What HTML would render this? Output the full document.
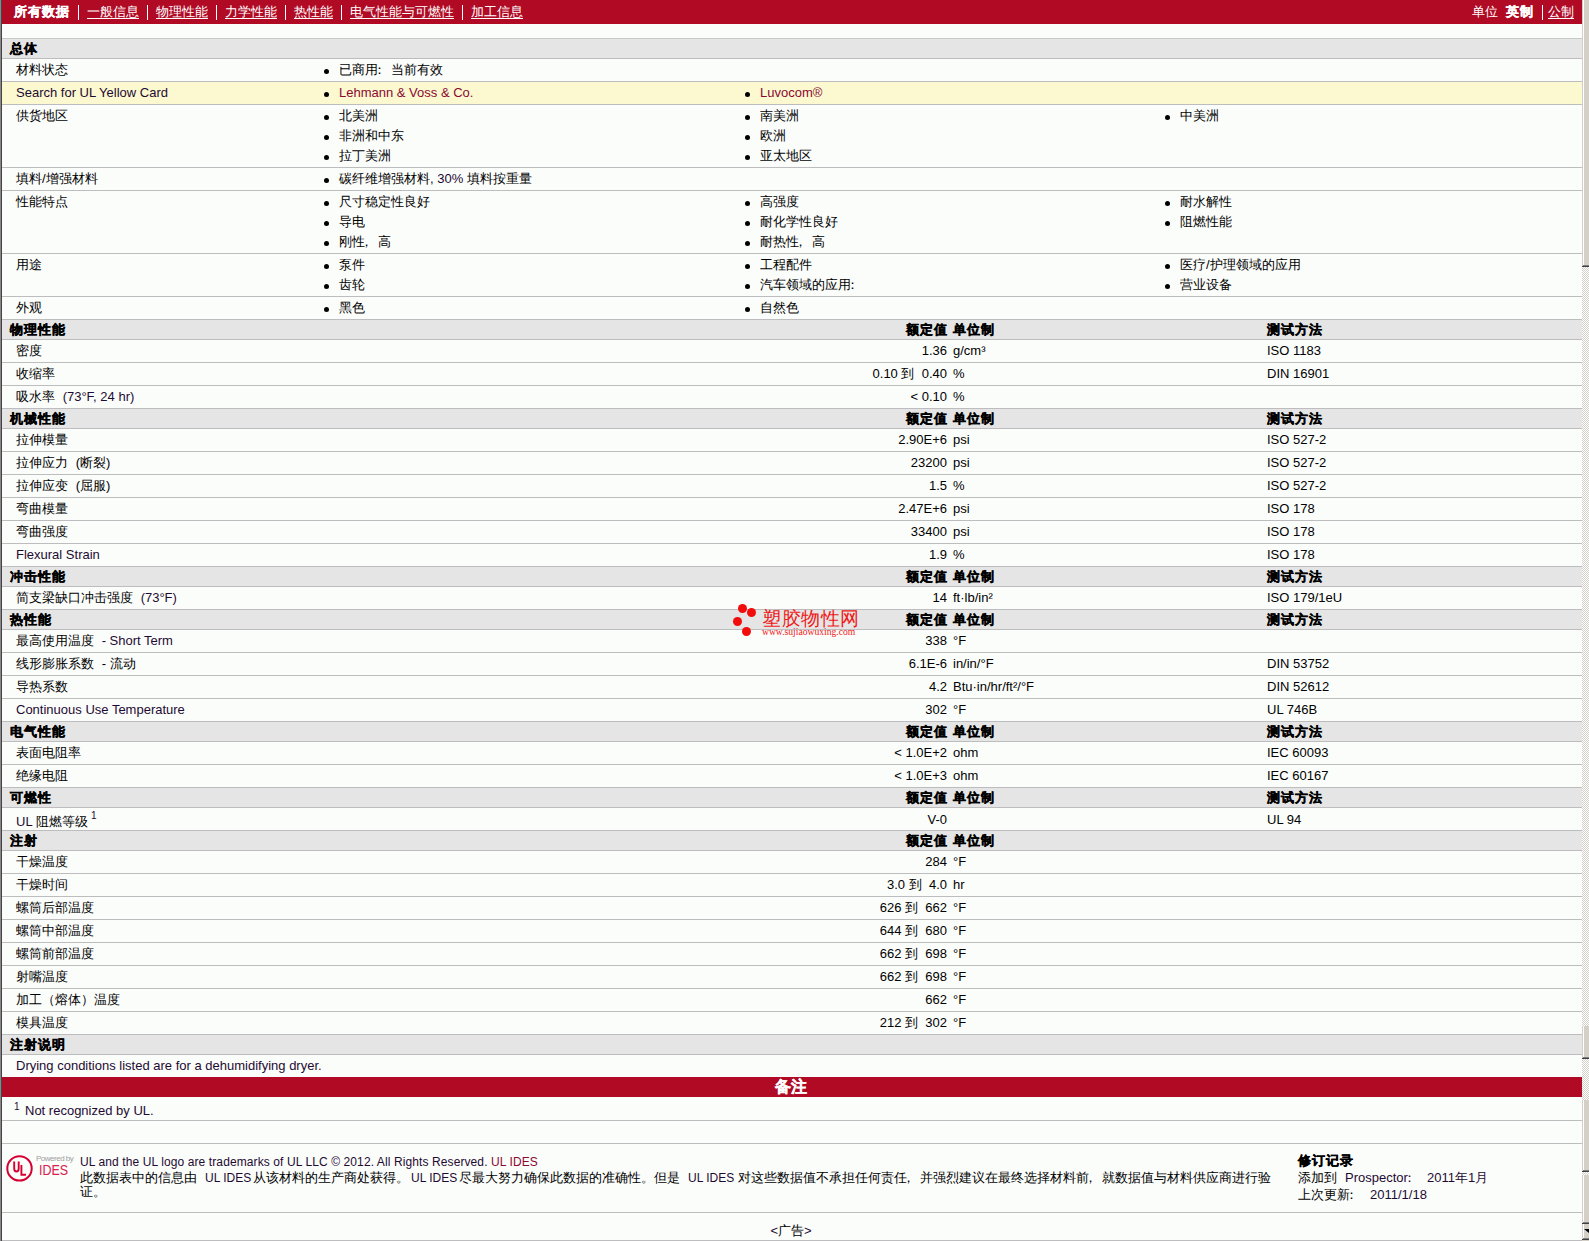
<!DOCTYPE html>
<html><head><meta charset="utf-8"><style>
html,body{margin:0;padding:0;}
body{width:1589px;height:1241px;overflow:hidden;position:relative;background:#FBFDFB;font-family:"Liberation Sans",sans-serif;font-size:13px;color:#000;}
.ln{position:absolute;left:2px;width:1580px;height:1px;}
.gb{position:absolute;left:2px;width:1580px;background:#E4E5E4;}
.rb{position:absolute;left:2px;width:1580px;background:#B00A25;}
.t,.tb,.nv,.bz{position:absolute;white-space:pre;line-height:20px;}
.tb{font-weight:bold;-webkit-text-stroke:0.35px #000;letter-spacing:1px;}
.la{color:#1E0A32;}
.bu{position:absolute;width:5px;height:5px;border-radius:50%;background:#000;}
.nv{top:2px;color:#fff;line-height:20px;}
.nv.u{text-decoration:underline;}
.bz{color:#fff;font-weight:bold;font-size:16px;-webkit-text-stroke:0.3px #fff;text-align:center;line-height:20px;}
sup{font-size:9px;vertical-align:top;position:relative;top:-3px;color:#1E0A32;margin-left:2px}
.ck{position:absolute;left:1582px;width:7px;background:conic-gradient(#D4D0C8 25%,#FFFFFF 0 50%,#D4D0C8 0 75%,#FFFFFF 0) 0 0/2px 2px;}
</style></head><body>
<div style="position:absolute;left:0;top:0;width:1px;height:1241px;background:#8A878A"></div>
<div style="position:absolute;left:1px;top:0;width:1px;height:1241px;background:#454346"></div>
<div class="rb" style="top:0;height:24px"></div>
<div class="nv" style="left:14px;font-weight:bold;letter-spacing:1px;-webkit-text-stroke:0.35px #fff;">所有数据</div>
<div class="nv" style="left:87px;">一般信息</div>
<div style="position:absolute;left:87px;top:18px;width:52px;height:1px;background:#fff"></div>
<div class="nv" style="left:156px;">物理性能</div>
<div style="position:absolute;left:156px;top:18px;width:52px;height:1px;background:#fff"></div>
<div class="nv" style="left:225px;">力学性能</div>
<div style="position:absolute;left:225px;top:18px;width:52px;height:1px;background:#fff"></div>
<div class="nv" style="left:294px;">热性能</div>
<div style="position:absolute;left:294px;top:18px;width:39px;height:1px;background:#fff"></div>
<div class="nv" style="left:350px;">电气性能与可燃性</div>
<div style="position:absolute;left:350px;top:18px;width:104px;height:1px;background:#fff"></div>
<div class="nv" style="left:471px;">加工信息</div>
<div style="position:absolute;left:471px;top:18px;width:52px;height:1px;background:#fff"></div>
<div class="nv" style="left:1472px;">单位</div>
<div class="nv" style="left:1506px;font-weight:bold;letter-spacing:1px;-webkit-text-stroke:0.35px #fff;">英制</div>
<div class="nv" style="left:1548px;">公制</div>
<div style="position:absolute;left:1548px;top:18px;width:26px;height:1px;background:#fff"></div>
<div style="position:absolute;left:78px;top:5px;width:1px;height:15px;background:#fff"></div>
<div style="position:absolute;left:147px;top:5px;width:1px;height:15px;background:#fff"></div>
<div style="position:absolute;left:216px;top:5px;width:1px;height:15px;background:#fff"></div>
<div style="position:absolute;left:285px;top:5px;width:1px;height:15px;background:#fff"></div>
<div style="position:absolute;left:341px;top:5px;width:1px;height:15px;background:#fff"></div>
<div style="position:absolute;left:462px;top:5px;width:1px;height:15px;background:#fff"></div>
<div style="position:absolute;left:1542px;top:5px;width:1px;height:15px;background:#fff"></div>

<div class="ln" style="top:38px;background:#C8CAC8"></div>
<div class="gb" style="top:39px;height:19px"></div>
<div class="tb" style="left:10px;top:39px;line-height:19px">总体</div>
<div class="ln" style="top:58px;background:#BDBDC0"></div>
<div class="t" style="left:16px;top:60px;">材料状态</div>
<div class="ln" style="top:81px;background:#BDBDC0"></div>
<div class="bu" style="left:324px;top:69px"></div>
<div class="t" style="left:339px;top:60px;">已商用<span style="display:inline-block;width:13px;overflow:hidden;vertical-align:top"><span style="position:relative;left:-5px">：</span></span>当前有效</div>
<div class="gb" style="top:82px;height:22px;background:#FCF9D0"></div>
<div class="t" style="left:16px;top:83px;"><span class="la">Search for UL Yellow Card</span></div>
<div class="ln" style="top:104px;background:#BDBDC0"></div>
<div class="bu" style="left:324px;top:92px"></div>
<div class="t" style="left:339px;top:83px;color:#8A0830">Lehmann &amp; Voss &amp; Co.</div>
<div class="bu" style="left:745px;top:92px"></div>
<div class="t" style="left:760px;top:83px;color:#8A0830">Luvocom®</div>
<div class="t" style="left:16px;top:106px;">供货地区</div>
<div class="ln" style="top:167px;background:#BDBDC0"></div>
<div class="bu" style="left:324px;top:115px"></div>
<div class="t" style="left:339px;top:106px;">北美洲</div>
<div class="bu" style="left:324px;top:135px"></div>
<div class="t" style="left:339px;top:126px;">非洲和中东</div>
<div class="bu" style="left:324px;top:155px"></div>
<div class="t" style="left:339px;top:146px;">拉丁美洲</div>
<div class="bu" style="left:745px;top:115px"></div>
<div class="t" style="left:760px;top:106px;">南美洲</div>
<div class="bu" style="left:745px;top:135px"></div>
<div class="t" style="left:760px;top:126px;">欧洲</div>
<div class="bu" style="left:745px;top:155px"></div>
<div class="t" style="left:760px;top:146px;">亚太地区</div>
<div class="bu" style="left:1165px;top:115px"></div>
<div class="t" style="left:1180px;top:106px;">中美洲</div>
<div class="t" style="left:16px;top:169px;">填料/增强材料</div>
<div class="ln" style="top:190px;background:#BDBDC0"></div>
<div class="bu" style="left:324px;top:178px"></div>
<div class="t" style="left:339px;top:169px;">碳纤维增强材料<span class="la">, 30% </span>填料按重量</div>
<div class="t" style="left:16px;top:192px;">性能特点</div>
<div class="ln" style="top:253px;background:#BDBDC0"></div>
<div class="bu" style="left:324px;top:201px"></div>
<div class="t" style="left:339px;top:192px;">尺寸稳定性良好</div>
<div class="bu" style="left:324px;top:221px"></div>
<div class="t" style="left:339px;top:212px;">导电</div>
<div class="bu" style="left:324px;top:241px"></div>
<div class="t" style="left:339px;top:232px;">刚性<span style="display:inline-block;width:13px;overflow:hidden;vertical-align:top"><span style="position:relative;left:-5px">，</span></span>高</div>
<div class="bu" style="left:745px;top:201px"></div>
<div class="t" style="left:760px;top:192px;">高强度</div>
<div class="bu" style="left:745px;top:221px"></div>
<div class="t" style="left:760px;top:212px;">耐化学性良好</div>
<div class="bu" style="left:745px;top:241px"></div>
<div class="t" style="left:760px;top:232px;">耐热性<span style="display:inline-block;width:13px;overflow:hidden;vertical-align:top"><span style="position:relative;left:-5px">，</span></span>高</div>
<div class="bu" style="left:1165px;top:201px"></div>
<div class="t" style="left:1180px;top:192px;">耐水解性</div>
<div class="bu" style="left:1165px;top:221px"></div>
<div class="t" style="left:1180px;top:212px;">阻燃性能</div>
<div class="t" style="left:16px;top:255px;">用途</div>
<div class="ln" style="top:296px;background:#BDBDC0"></div>
<div class="bu" style="left:324px;top:264px"></div>
<div class="t" style="left:339px;top:255px;">泵件</div>
<div class="bu" style="left:324px;top:284px"></div>
<div class="t" style="left:339px;top:275px;">齿轮</div>
<div class="bu" style="left:745px;top:264px"></div>
<div class="t" style="left:760px;top:255px;">工程配件</div>
<div class="bu" style="left:745px;top:284px"></div>
<div class="t" style="left:760px;top:275px;">汽车领域的应用<span style="display:inline-block;width:13px;overflow:hidden;vertical-align:top"><span style="position:relative;left:-5px">：</span></span></div>
<div class="bu" style="left:1165px;top:264px"></div>
<div class="t" style="left:1180px;top:255px;">医疗/护理领域的应用</div>
<div class="bu" style="left:1165px;top:284px"></div>
<div class="t" style="left:1180px;top:275px;">营业设备</div>
<div class="t" style="left:16px;top:298px;">外观</div>
<div class="ln" style="top:319px;background:#BDBDC0"></div>
<div class="bu" style="left:324px;top:307px"></div>
<div class="t" style="left:339px;top:298px;">黑色</div>
<div class="bu" style="left:745px;top:307px"></div>
<div class="t" style="left:760px;top:298px;">自然色</div>
<div class="gb" style="top:320px;height:19px"></div>
<div class="tb" style="left:10px;top:320px;line-height:19px">物理性能</div>
<div class="tb" style="right:641px;top:320px;line-height:19px">额定值</div>
<div class="tb" style="left:953px;top:320px;line-height:19px">单位制</div>
<div class="tb" style="left:1267px;top:320px;line-height:19px">测试方法</div>
<div class="ln" style="top:339px;background:#BDBDC0"></div>
<div class="t" style="left:16px;top:341px;">密度</div>
<div class="ln" style="top:362px;background:#BDBDC0"></div>
<div class="t" style="right:642px;top:341px;white-space:pre">1.36</div>
<div class="t" style="left:953px;top:341px;">g/cm³</div>
<div class="t" style="left:1267px;top:341px;">ISO 1183</div>
<div class="t" style="left:16px;top:364px;">收缩率</div>
<div class="ln" style="top:385px;background:#BDBDC0"></div>
<div class="t" style="right:642px;top:364px;white-space:pre">0.10 到  0.40</div>
<div class="t" style="left:953px;top:364px;">%</div>
<div class="t" style="left:1267px;top:364px;">DIN 16901</div>
<div class="t" style="left:16px;top:387px;">吸水率 <span class="la" style="margin-left:4px">(73°F, 24 hr)</span></div>
<div class="ln" style="top:408px;background:#BDBDC0"></div>
<div class="t" style="right:642px;top:387px;white-space:pre">&lt; 0.10</div>
<div class="t" style="left:953px;top:387px;">%</div>
<div class="gb" style="top:409px;height:19px"></div>
<div class="tb" style="left:10px;top:409px;line-height:19px">机械性能</div>
<div class="tb" style="right:641px;top:409px;line-height:19px">额定值</div>
<div class="tb" style="left:953px;top:409px;line-height:19px">单位制</div>
<div class="tb" style="left:1267px;top:409px;line-height:19px">测试方法</div>
<div class="ln" style="top:428px;background:#BDBDC0"></div>
<div class="t" style="left:16px;top:430px;">拉伸模量</div>
<div class="ln" style="top:451px;background:#BDBDC0"></div>
<div class="t" style="right:642px;top:430px;white-space:pre">2.90E+6</div>
<div class="t" style="left:953px;top:430px;">psi</div>
<div class="t" style="left:1267px;top:430px;">ISO 527-2</div>
<div class="t" style="left:16px;top:453px;">拉伸应力 <span style="margin-left:4px">(断裂)</span></div>
<div class="ln" style="top:474px;background:#BDBDC0"></div>
<div class="t" style="right:642px;top:453px;white-space:pre">23200</div>
<div class="t" style="left:953px;top:453px;">psi</div>
<div class="t" style="left:1267px;top:453px;">ISO 527-2</div>
<div class="t" style="left:16px;top:476px;">拉伸应变 <span style="margin-left:4px">(屈服)</span></div>
<div class="ln" style="top:497px;background:#BDBDC0"></div>
<div class="t" style="right:642px;top:476px;white-space:pre">1.5</div>
<div class="t" style="left:953px;top:476px;">%</div>
<div class="t" style="left:1267px;top:476px;">ISO 527-2</div>
<div class="t" style="left:16px;top:499px;">弯曲模量</div>
<div class="ln" style="top:520px;background:#BDBDC0"></div>
<div class="t" style="right:642px;top:499px;white-space:pre">2.47E+6</div>
<div class="t" style="left:953px;top:499px;">psi</div>
<div class="t" style="left:1267px;top:499px;">ISO 178</div>
<div class="t" style="left:16px;top:522px;">弯曲强度</div>
<div class="ln" style="top:543px;background:#BDBDC0"></div>
<div class="t" style="right:642px;top:522px;white-space:pre">33400</div>
<div class="t" style="left:953px;top:522px;">psi</div>
<div class="t" style="left:1267px;top:522px;">ISO 178</div>
<div class="t" style="left:16px;top:545px;"><span class="la">Flexural Strain</span></div>
<div class="ln" style="top:566px;background:#BDBDC0"></div>
<div class="t" style="right:642px;top:545px;white-space:pre">1.9</div>
<div class="t" style="left:953px;top:545px;">%</div>
<div class="t" style="left:1267px;top:545px;">ISO 178</div>
<div class="gb" style="top:567px;height:19px"></div>
<div class="tb" style="left:10px;top:567px;line-height:19px">冲击性能</div>
<div class="tb" style="right:641px;top:567px;line-height:19px">额定值</div>
<div class="tb" style="left:953px;top:567px;line-height:19px">单位制</div>
<div class="tb" style="left:1267px;top:567px;line-height:19px">测试方法</div>
<div class="ln" style="top:586px;background:#BDBDC0"></div>
<div class="t" style="left:16px;top:588px;">简支梁缺口冲击强度 <span class="la" style="margin-left:4px">(73°F)</span></div>
<div class="ln" style="top:609px;background:#BDBDC0"></div>
<div class="t" style="right:642px;top:588px;white-space:pre">14</div>
<div class="t" style="left:953px;top:588px;">ft·lb/in²</div>
<div class="t" style="left:1267px;top:588px;">ISO 179/1eU</div>
<div class="gb" style="top:610px;height:19px"></div>
<div class="tb" style="left:10px;top:610px;line-height:19px">热性能</div>
<div class="tb" style="right:641px;top:610px;line-height:19px">额定值</div>
<div class="tb" style="left:953px;top:610px;line-height:19px">单位制</div>
<div class="tb" style="left:1267px;top:610px;line-height:19px">测试方法</div>
<div class="ln" style="top:629px;background:#BDBDC0"></div>
<div class="t" style="left:16px;top:631px;">最高使用温度 <span class="la" style="margin-left:4px">- Short Term</span></div>
<div class="ln" style="top:652px;background:#BDBDC0"></div>
<div class="t" style="right:642px;top:631px;white-space:pre">338</div>
<div class="t" style="left:953px;top:631px;">°F</div>
<div class="t" style="left:16px;top:654px;">线形膨胀系数 <span style="margin-left:4px">- 流动</span></div>
<div class="ln" style="top:675px;background:#BDBDC0"></div>
<div class="t" style="right:642px;top:654px;white-space:pre">6.1E-6</div>
<div class="t" style="left:953px;top:654px;">in/in/°F</div>
<div class="t" style="left:1267px;top:654px;">DIN 53752</div>
<div class="t" style="left:16px;top:677px;">导热系数</div>
<div class="ln" style="top:698px;background:#BDBDC0"></div>
<div class="t" style="right:642px;top:677px;white-space:pre">4.2</div>
<div class="t" style="left:953px;top:677px;">Btu·in/hr/ft²/°F</div>
<div class="t" style="left:1267px;top:677px;">DIN 52612</div>
<div class="t" style="left:16px;top:700px;"><span class="la">Continuous Use Temperature</span></div>
<div class="ln" style="top:721px;background:#BDBDC0"></div>
<div class="t" style="right:642px;top:700px;white-space:pre">302</div>
<div class="t" style="left:953px;top:700px;">°F</div>
<div class="t" style="left:1267px;top:700px;">UL 746B</div>
<div class="gb" style="top:722px;height:19px"></div>
<div class="tb" style="left:10px;top:722px;line-height:19px">电气性能</div>
<div class="tb" style="right:641px;top:722px;line-height:19px">额定值</div>
<div class="tb" style="left:953px;top:722px;line-height:19px">单位制</div>
<div class="tb" style="left:1267px;top:722px;line-height:19px">测试方法</div>
<div class="ln" style="top:741px;background:#BDBDC0"></div>
<div class="t" style="left:16px;top:743px;">表面电阻率</div>
<div class="ln" style="top:764px;background:#BDBDC0"></div>
<div class="t" style="right:642px;top:743px;white-space:pre">&lt; 1.0E+2</div>
<div class="t" style="left:953px;top:743px;">ohm</div>
<div class="t" style="left:1267px;top:743px;">IEC 60093</div>
<div class="t" style="left:16px;top:766px;">绝缘电阻</div>
<div class="ln" style="top:787px;background:#BDBDC0"></div>
<div class="t" style="right:642px;top:766px;white-space:pre">&lt; 1.0E+3</div>
<div class="t" style="left:953px;top:766px;">ohm</div>
<div class="t" style="left:1267px;top:766px;">IEC 60167</div>
<div class="gb" style="top:788px;height:19px"></div>
<div class="tb" style="left:10px;top:788px;line-height:19px">可燃性</div>
<div class="tb" style="right:641px;top:788px;line-height:19px">额定值</div>
<div class="tb" style="left:953px;top:788px;line-height:19px">单位制</div>
<div class="tb" style="left:1267px;top:788px;line-height:19px">测试方法</div>
<div class="ln" style="top:807px;background:#BDBDC0"></div>
<div class="t" style="left:16px;top:812px;"><span class="la">UL</span> 阻燃等级</div>
<div class="ln" style="top:830px;background:#BDBDC0"></div>
<div class="t" style="right:642px;top:810px;white-space:pre">V-0</div>
<div class="t" style="left:1267px;top:810px;">UL 94</div>
<div class="t la" style="left:91px;top:811px;font-size:10px;line-height:10px">1</div>
<div class="gb" style="top:831px;height:19px"></div>
<div class="tb" style="left:10px;top:831px;line-height:19px">注射</div>
<div class="tb" style="right:641px;top:831px;line-height:19px">额定值</div>
<div class="tb" style="left:953px;top:831px;line-height:19px">单位制</div>
<div class="ln" style="top:850px;background:#BDBDC0"></div>
<div class="t" style="left:16px;top:852px;">干燥温度</div>
<div class="ln" style="top:873px;background:#BDBDC0"></div>
<div class="t" style="right:642px;top:852px;white-space:pre">284</div>
<div class="t" style="left:953px;top:852px;">°F</div>
<div class="t" style="left:16px;top:875px;">干燥时间</div>
<div class="ln" style="top:896px;background:#BDBDC0"></div>
<div class="t" style="right:642px;top:875px;white-space:pre">3.0 到  4.0</div>
<div class="t" style="left:953px;top:875px;">hr</div>
<div class="t" style="left:16px;top:898px;">螺筒后部温度</div>
<div class="ln" style="top:919px;background:#BDBDC0"></div>
<div class="t" style="right:642px;top:898px;white-space:pre">626 到  662</div>
<div class="t" style="left:953px;top:898px;">°F</div>
<div class="t" style="left:16px;top:921px;">螺筒中部温度</div>
<div class="ln" style="top:942px;background:#BDBDC0"></div>
<div class="t" style="right:642px;top:921px;white-space:pre">644 到  680</div>
<div class="t" style="left:953px;top:921px;">°F</div>
<div class="t" style="left:16px;top:944px;">螺筒前部温度</div>
<div class="ln" style="top:965px;background:#BDBDC0"></div>
<div class="t" style="right:642px;top:944px;white-space:pre">662 到  698</div>
<div class="t" style="left:953px;top:944px;">°F</div>
<div class="t" style="left:16px;top:967px;">射嘴温度</div>
<div class="ln" style="top:988px;background:#BDBDC0"></div>
<div class="t" style="right:642px;top:967px;white-space:pre">662 到  698</div>
<div class="t" style="left:953px;top:967px;">°F</div>
<div class="t" style="left:16px;top:990px;">加工（熔体）温度</div>
<div class="ln" style="top:1011px;background:#BDBDC0"></div>
<div class="t" style="right:642px;top:990px;white-space:pre">662</div>
<div class="t" style="left:953px;top:990px;">°F</div>
<div class="t" style="left:16px;top:1013px;">模具温度</div>
<div class="ln" style="top:1034px;background:#BDBDC0"></div>
<div class="t" style="right:642px;top:1013px;white-space:pre">212 到  302</div>
<div class="t" style="left:953px;top:1013px;">°F</div>
<div class="gb" style="top:1035px;height:19px"></div>
<div class="tb" style="left:10px;top:1035px;line-height:19px">注射说明</div>
<div class="ln" style="top:1054px;background:#BDBDC0"></div>
<div class="t" style="left:16px;top:1056px;"><span class="la">Drying conditions listed are for a dehumidifying dryer.</span></div>
<div class="rb" style="top:1077px;height:20px"></div>
<div class="bz" style="left:0;width:1582px;top:1077px">备注</div>
<div class="t la" style="left:14px;top:1102px;font-size:10px;line-height:10px">1</div>
<div class="t" style="left:25px;top:1101px;"><span class="la">Not recognized by UL.</span></div>
<div class="ln" style="top:1120px;background:#BDBDC0"></div>
<div class="ln" style="top:1143px;background:#BDBDC0"></div>
<div class="ln" style="top:1212px;background:#BDBDC0"></div>
<div class="ln" style="top:1240px;background:#BDBDC0"></div>

<svg style="position:absolute;left:5px;top:1154px" width="30" height="30" viewBox="0 0 30 30">
<circle cx="14.5" cy="14.4" r="12.2" fill="none" stroke="#D50032" stroke-width="2"/>
<path d="M9.2 7.5 V14.5 Q9.2 17.5 11.5 17.5 Q13.7 17.5 13.7 14.5 V7.5" fill="none" stroke="#D50032" stroke-width="1.9"/>
<path d="M16.4 11 V20.7 H21" fill="none" stroke="#D50032" stroke-width="1.9"/>
</svg>
<div class="t" style="left:36px;top:1154px;font-size:8px;line-height:10px;color:#A0A0A0;letter-spacing:-0.5px">Powered by</div>
<div class="t" style="left:39px;top:1161px;font-size:14.5px;line-height:18px;color:#D8204A;transform:scaleX(0.86);transform-origin:0 0">IDES</div>
<div class="t" style="left:80px;top:1152px;font-size:12px;letter-spacing:0.1px"><span class="la">UL and the UL logo are trademarks of UL LLC © 2012. All Rights Reserved. <span style="color:#8A0830">UL IDES</span></span></div>
<div class="t" style="left:80px;top:1168px">此数据表中的信息由</div>
<div class="t la" style="left:205px;top:1168px;font-size:12px">UL IDES</div>
<div class="t" style="left:253px;top:1168px">从该材料的生产商处获得。</div>
<div class="t la" style="left:411px;top:1168px;font-size:12px">UL IDES</div>
<div class="t" style="left:459px;top:1168px">尽最大努力确保此数据的准确性。但是</div>
<div class="t la" style="left:688px;top:1168px;font-size:12px">UL IDES</div>
<div class="t" style="left:738px;top:1168px">对这些数据值不承担任何责任<span style="display:inline-block;width:13px;overflow:hidden;vertical-align:top"><span style="position:relative;left:-5px">，</span></span>并强烈建议在最终选择材料前<span style="display:inline-block;width:13px;overflow:hidden;vertical-align:top"><span style="position:relative;left:-5px">，</span></span>就数据值与材料供应商进行验</div>
<div class="t" style="left:80px;top:1182px">证。</div>
<div class="tb" style="left:1298px;top:1153px;line-height:15px">修订记录</div>
<div class="t" style="left:1298px;top:1170px;line-height:15px">添加到</div>
<div class="t la" style="left:1345px;top:1170px;line-height:15px">Prospector<span style="display:inline-block;width:13px;overflow:hidden;vertical-align:top"><span style="position:relative;left:-5px">：</span></span></div>
<div class="t la" style="left:1427px;top:1170px;line-height:15px">2011年1月</div>
<div class="t" style="left:1298px;top:1187px;line-height:15px">上次更新<span style="display:inline-block;width:13px;overflow:hidden;vertical-align:top"><span style="position:relative;left:-5px">：</span></span></div>
<div class="t la" style="left:1370px;top:1187px;line-height:15px">2011/1/18</div>
<div class="t" style="left:0;width:1582px;text-align:center;top:1223px;line-height:15px"><span class="la">&lt;</span>广告<span class="la">&gt;</span></div>


<div style="position:absolute;left:738px;top:604px;width:9px;height:9px;border-radius:50%;background:#F20C0C"></div>
<div style="position:absolute;left:747px;top:608px;width:9px;height:9px;border-radius:50%;background:#F20C0C"></div>
<div style="position:absolute;left:733px;top:617px;width:9px;height:9px;border-radius:50%;background:#F20C0C"></div>
<div style="position:absolute;left:742px;top:627px;width:9px;height:9px;border-radius:50%;background:#F20C0C"></div>
<div class="t" style="left:762px;top:608px;font-size:19px;line-height:22px;color:#F01818;font-weight:normal;letter-spacing:0.5px">塑胶物性网</div>
<div class="t" style="left:762px;top:627px;font-family:'Liberation Serif',serif;font-size:9.6px;line-height:10px;color:#F01818">www.sujiaowuxing.com</div>

<div style="position:absolute;left:1582px;top:0px;width:7px;height:267px;background:#D4D0C8"></div><div style="position:absolute;left:1583px;top:0px;width:1px;height:265px;background:#FFFFFF"></div><div style="position:absolute;left:1583px;top:265px;width:6px;height:1px;background:#808080"></div><div style="position:absolute;left:1582px;top:266px;width:7px;height:1px;background:#404040"></div><div class="ck" style="top:267px;height:759px"></div><div style="position:absolute;left:1582px;top:1026px;width:7px;height:33px;background:#D4D0C8"></div><div style="position:absolute;left:1583px;top:1026px;width:1px;height:31px;background:#FFFFFF"></div><div style="position:absolute;left:1583px;top:1057px;width:6px;height:1px;background:#808080"></div><div style="position:absolute;left:1582px;top:1058px;width:7px;height:1px;background:#404040"></div><div class="ck" style="top:1059px;height:41px"></div><div style="position:absolute;left:1582px;top:1100px;width:7px;height:72px;background:#D4D0C8"></div><div style="position:absolute;left:1583px;top:1100px;width:1px;height:70px;background:#FFFFFF"></div><div style="position:absolute;left:1583px;top:1170px;width:6px;height:1px;background:#808080"></div><div style="position:absolute;left:1582px;top:1171px;width:7px;height:1px;background:#404040"></div><div class="ck" style="top:1172px;height:3px"></div><div style="position:absolute;left:1582px;top:1175px;width:7px;height:49px;background:#D4D0C8"></div><div style="position:absolute;left:1583px;top:1175px;width:1px;height:47px;background:#FFFFFF"></div><div style="position:absolute;left:1583px;top:1222px;width:6px;height:1px;background:#808080"></div><div style="position:absolute;left:1582px;top:1223px;width:7px;height:1px;background:#404040"></div><div style="position:absolute;left:1582px;top:1224px;width:7px;height:16px;background:#D4D0C8"></div><div style="position:absolute;left:1583px;top:1224px;width:1px;height:14px;background:#FFFFFF"></div><div style="position:absolute;left:1583px;top:1238px;width:6px;height:1px;background:#808080"></div><div style="position:absolute;left:1582px;top:1239px;width:7px;height:1px;background:#404040"></div><div style="position:absolute;left:1582px;top:1240px;width:7px;height:1px;background:#D4D0C8"></div><svg style="position:absolute;left:1584px;top:1228px" width="5" height="5"><path d="M0 1H5L5 5Z" fill="#000"/></svg>
</body></html>
